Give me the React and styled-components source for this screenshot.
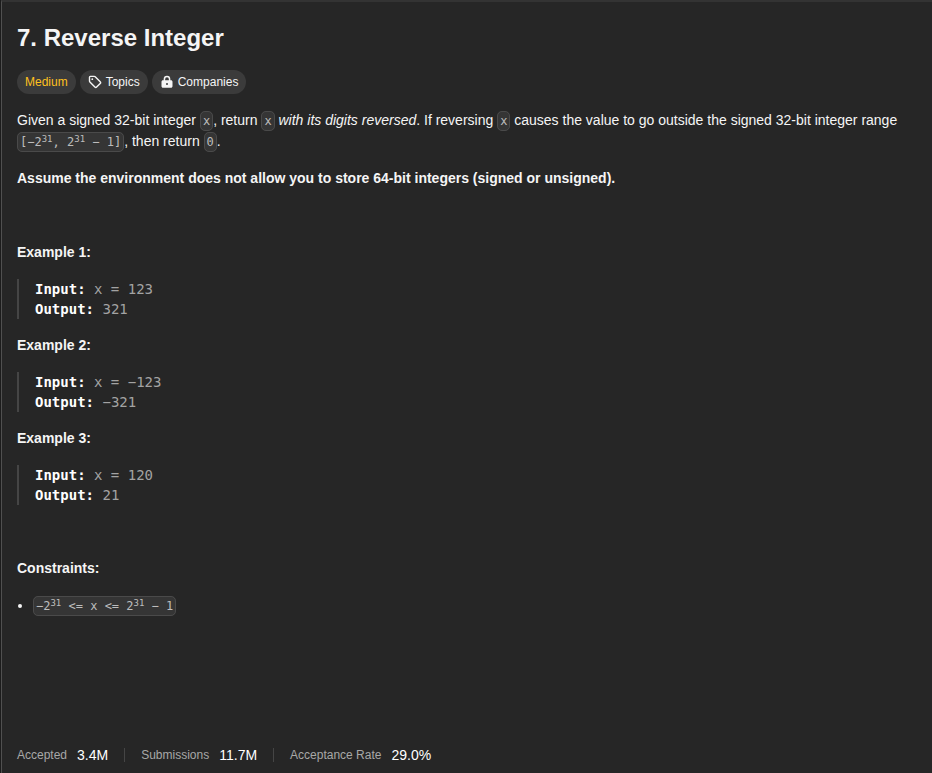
import React from "react";
import styled, { createGlobalStyle } from "styled-components";

const GlobalStyle = createGlobalStyle`
  *, *::before, *::after { box-sizing: border-box; }
  body {
    margin: 0;
    background: #1c1c1c;
    color: #f5f5f5;
    font-family: "Liberation Sans", Arial, sans-serif;
    font-size: 14px;
    line-height: 21px;
  }
`;

const Panel = styled.main`
  display: flex;
  flex-direction: column;
  min-height: 100vh;
  margin-left: 1px;
  padding: 20px 16px 8px 15px;
  border-top: 2px solid #333333;
  border-left: 1px solid #505050;
  background: #262626;
`;

const Title = styled.h1`
  margin: 0;
  font-size: 24px;
  line-height: 32px;
  font-weight: 700;
`;

const Tags = styled.div`
  display: flex;
  flex-wrap: wrap;
  gap: 4px;
  margin-top: 16px;
`;

const Tag = styled.button`
  display: inline-flex;
  align-items: center;
  gap: 4px;
  height: 24px;
  padding: 0 8px;
  border: 0;
  border-radius: 12px;
  background: #3b3b3b;
  color: ${(p) => (p.$accent ? "#ffc01e" : "#f5f5f5")};
  font-family: inherit;
  font-size: 12px;
  line-height: 16px;
  cursor: pointer;

  svg { width: 14px; height: 14px; }
`;

const Content = styled.article`
  flex: 1;
  margin-top: 16px;
`;

const Text = styled.p`
  margin: 0 0 16px;
`;

const Code = styled.code`
  padding: 2px;
  border: 1px solid #4a4a4a;
  border-radius: 5px;
  background: #353535;
  color: #bdbdbd;
  font-family: "DejaVu Sans Mono", monospace;
  font-size: 12px;
  line-height: 16px;
  white-space: nowrap;
`;

const Sup = styled.sup`
  font-size: 9px;
  line-height: 0;
  vertical-align: 4px;
`;

const Sample = styled.pre`
  margin: 0 0 16px;
  padding-left: 16px;
  border-left: 2px solid #454545;
  color: #a3a3a3;
  font-family: "DejaVu Sans Mono", monospace;
  font-size: 14px;
  line-height: 20px;

  strong { color: #ffffff; }
`;

const Limits = styled.ul`
  margin: 0 0 16px;
  padding-left: 16px;
`;

const Stats = styled.footer`
  display: flex;
  flex-wrap: wrap;
  align-items: center;
`;

const Stat = styled.div`
  display: flex;
  align-items: center;
  gap: 10px;
  line-height: 20px;

  & + &::before {
    content: "";
    width: 1px;
    height: 14px;
    margin: 0 6px 0 16px;
    background: #454545;
  }
`;

const StatLabel = styled.span`
  color: #a8a8a8;
  font-size: 12px;
`;

const StatValue = styled.span`
  color: #ffffff;
  font-size: 14px;
`;

const TagIcon = () => (
  <svg viewBox="0 0 14 14" fill="none" stroke="currentColor" strokeWidth="1.4" strokeLinejoin="round" aria-hidden="true">
    <path d="M1.5 2.2v3.9c0 .4.1.7.4 1l5 5c.5.5 1.2.5 1.7 0l3.6-3.6c.5-.5.5-1.2 0-1.7l-5-5c-.3-.3-.6-.4-1-.4H2.3c-.4 0-.8.4-.8.8z" />
    <circle cx="4.3" cy="4.2" r=".9" fill="currentColor" stroke="none" />
  </svg>
);

const LockIcon = () => (
  <svg viewBox="0 0 14 14" aria-hidden="true">
    <path d="M4.4 6V4.2a2.6 2.6 0 0 1 5.2 0V6" fill="none" stroke="currentColor" strokeWidth="1.5" />
    <path
      fill="currentColor"
      fillRule="evenodd"
      d="M3 5.3h8c.8 0 1.5.7 1.5 1.5v4.4c0 .8-.7 1.5-1.5 1.5H3c-.8 0-1.5-.7-1.5-1.5V6.8c0-.8.7-1.5 1.5-1.5zM7 8a1 1 0 1 0 0 2a1 1 0 0 0 0-2z"
    />
  </svg>
);

const examples = [
  { input: "x = 123", output: "321" },
  { input: "x = −123", output: "−321" },
  { input: "x = 120", output: "21" },
];

const stats = [
  { label: "Accepted", value: "3.4M" },
  { label: "Submissions", value: "11.7M" },
  { label: "Acceptance Rate", value: "29.0%" },
];

export default function App() {
  return (
    <>
      <GlobalStyle />
      <Panel>
        <Title>7. Reverse Integer</Title>
        <Tags>
          <Tag $accent>Medium</Tag>
          <Tag><TagIcon />Topics</Tag>
          <Tag><LockIcon />Companies</Tag>
        </Tags>
        <Content>
          <Text>
            Given a signed 32-bit integer <Code>x</Code>, return <Code>x</Code>{" "}
            <em>with its digits reversed</em>. If reversing <Code>x</Code> causes the value to go
            outside the signed 32-bit integer range{" "}
            <Code>[−2<Sup>31</Sup>, 2<Sup>31</Sup> − 1]</Code>, then return <Code>0</Code>.
          </Text>
          <Text>
            <strong>
              Assume the environment does not allow you to store 64-bit integers (signed or unsigned).
            </strong>
          </Text>
          <Text>&nbsp;</Text>
          {examples.map((example, i) => (
            <React.Fragment key={example.input}>
              <Text><strong>Example {i + 1}:</strong></Text>
              <Sample>
                <strong>Input:</strong> {example.input}{"\n"}
                <strong>Output:</strong> {example.output}
              </Sample>
            </React.Fragment>
          ))}
          <Text>&nbsp;</Text>
          <Text><strong>Constraints:</strong></Text>
          <Limits>
            <li><Code>−2<Sup>31</Sup> &lt;= x &lt;= 2<Sup>31</Sup> − 1</Code></li>
          </Limits>
        </Content>
        <Stats>
          {stats.map((stat) => (
            <Stat key={stat.label}>
              <StatLabel>{stat.label}</StatLabel>
              <StatValue>{stat.value}</StatValue>
            </Stat>
          ))}
        </Stats>
      </Panel>
    </>
  );
}
